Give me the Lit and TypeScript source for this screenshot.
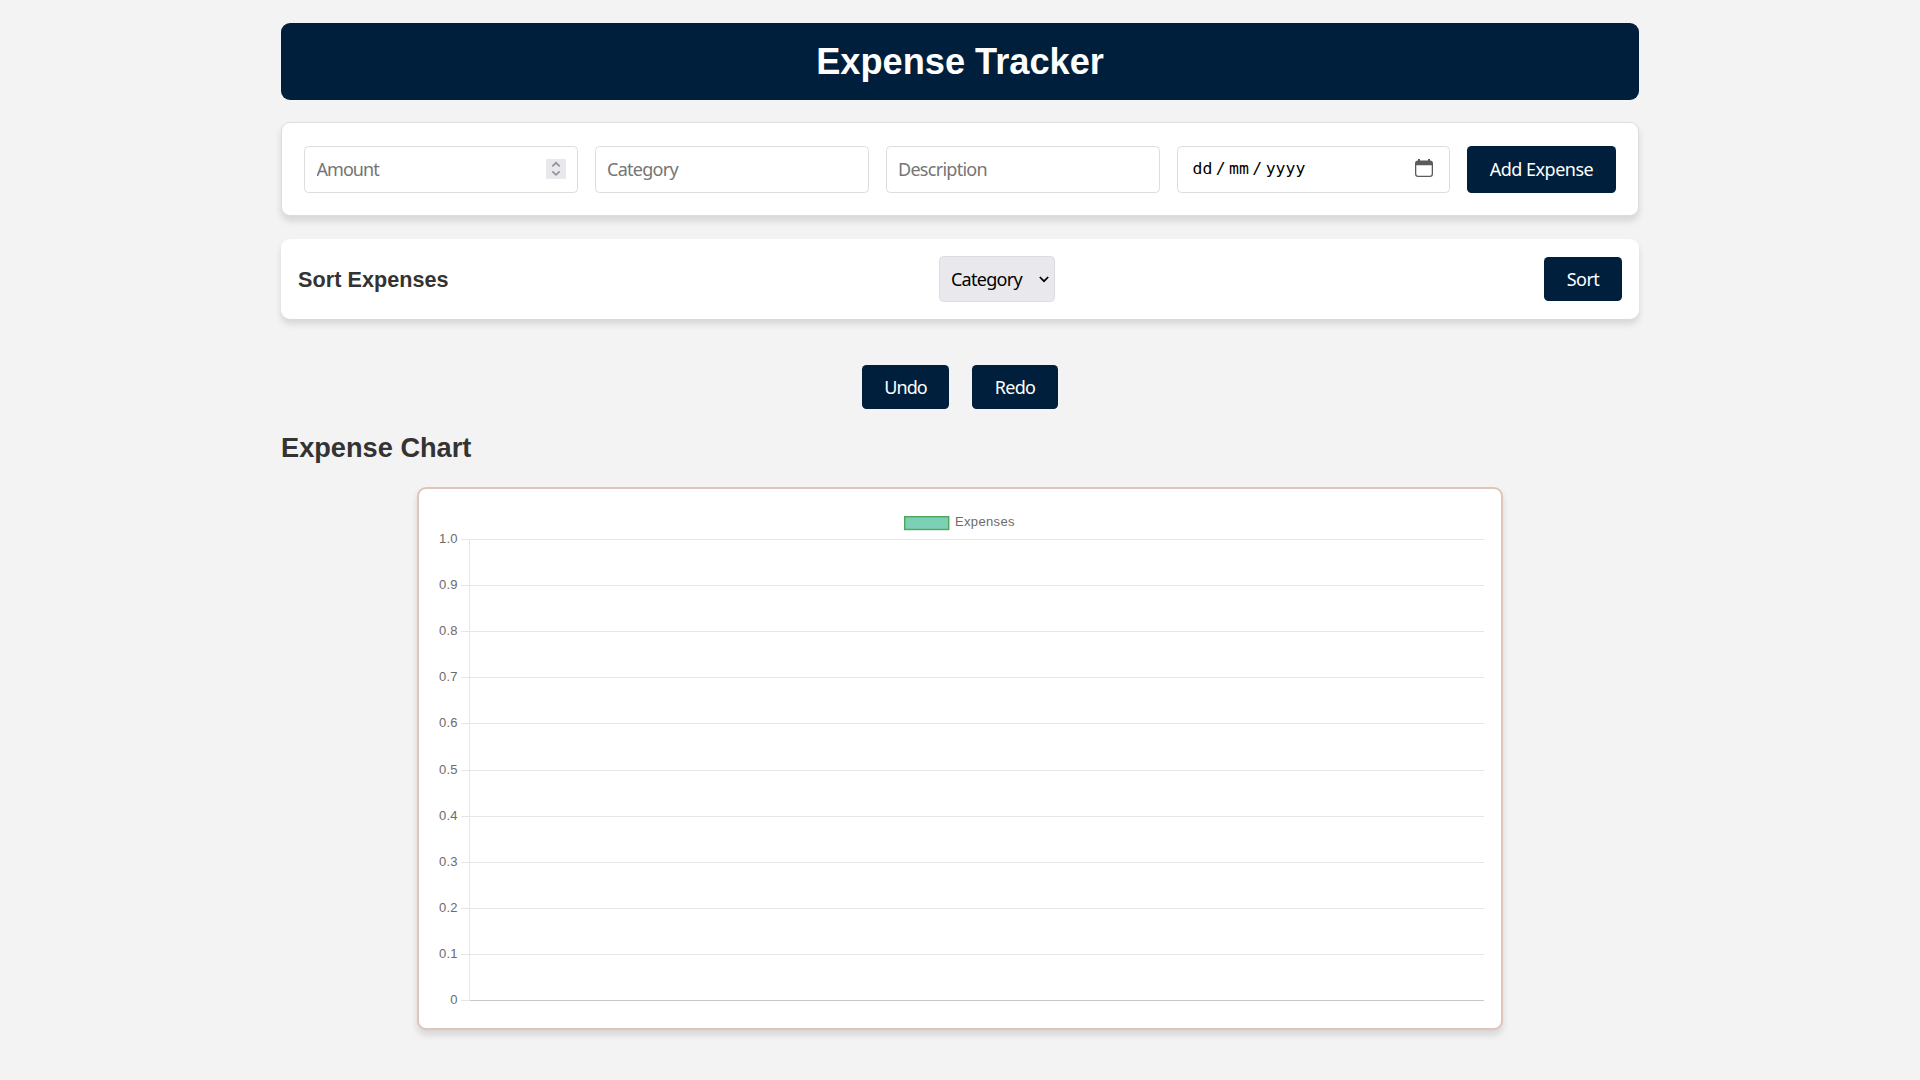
import { LitElement, html, svg, css } from "lit";
import { customElement } from "lit/decorators.js";

@customElement("expense-chart")
class ExpenseChart extends LitElement {
  static styles = css`
    :host { display: block; height: 100%; }
    svg { display: block; }
    text { font-family: "Liberation Sans", Arial, sans-serif; font-size: 13px; fill: #6b6b6b; }
    .tick { letter-spacing: 0.3px; }
    .grid { stroke: #e6e6e6; stroke-width: 1; }
    .axis { stroke: #c8c8c8; stroke-width: 1; }
    .swatch { fill: #7bd0b6; stroke: #4fa65a; stroke-width: 1.4; }
  `;

  render() {
    const rows = Array.from({ length: 11 }, (_, i) => ({
      y: Math.round(50 + i * 46.1) + 0.5,
      label: i === 0 ? "1.0" : i === 10 ? "0" : `0.${10 - i}`,
    }));
    return html`<svg width="1082" height="539" viewBox="0 0 1082 539">
      <rect class="swatch" x="485.7" y="27.7" width="44" height="12.8" />
      <text x="536" y="37.3" textLength="59" lengthAdjust="spacing">Expenses</text>
      ${rows.map(
        (r, i) => svg`
          <text class="tick" x="38.9" y=${r.y + 3.7} text-anchor="end">${r.label}</text>
          <line class="grid" x1="42" y1=${r.y} x2="1065" y2=${r.y} />
          ${i === 10 ? svg`<line class="axis" x1="50" y1=${r.y} x2="1065" y2=${r.y} />` : ""}`
      )}
      <line class="grid" x1="50.5" y1="50" x2="50.5" y2="512" />
    </svg>`;
  }
}

@customElement("app-root")
class AppRoot extends LitElement {
  static styles = css`
    :host {
      display: block;
      min-height: 1080px;
      box-sizing: border-box;
      padding: 23px 281px 0;
      background: #f3f3f3;
      color: #333;
      font-family: "Noto Sans", sans-serif;
      font-size: 18px;
      letter-spacing: -0.5px;
    }
    * { box-sizing: border-box; }
    h1, h2, h3 { margin: 0; font-family: "Liberation Sans", Arial, sans-serif; font-weight: 700; letter-spacing: 0; }
    .title {
      height: 77px;
      line-height: 77px;
      border-radius: 9px;
      background: #001f3c;
      color: #fff;
      font-size: 36.2px;
      text-align: center;
    }
    .card { display: flex; align-items: center; background: #fff; border-radius: 9px; box-shadow: 0 5px 7px rgba(0, 0, 0, 0.12); }
    .form { height: 94px; margin-top: 22px; padding: 0 22px; gap: 17px; border: 1px solid #ddd; }
    .sort { height: 80px; margin-top: 23px; padding: 0 17px; justify-content: space-between; }
    .sort h3 { padding: 2px 1.2px 0 0; font-size: 21.6px; letter-spacing: 0.05px; }
    .field {
      flex: 1 1 100px;
      min-width: 0;
      height: 47px;
      padding: 0 11px;
      display: flex;
      align-items: center;
      border: 1px solid #ddd;
      border-radius: 4.5px;
      background: #fff;
    }
    .field input {
      flex: 1;
      min-width: 0;
      padding: 0;
      border: 0;
      outline: 0;
      background: none;
      font: inherit;
      letter-spacing: -0.72px;
    }
    .field .amount { padding-left: 0.5px; letter-spacing: -0.95px; }
    .field input::placeholder { color: #757575; opacity: 1; }
    .spin { display: block; width: 20px; height: 20px; margin-bottom: 1px; background: #e9e9ed; }
    .date { flex-basis: 99px; padding: 0 16px 2px 14.5px; color: #000; font-family: "DejaVu Sans Mono", monospace; font-size: 16.5px; letter-spacing: 0; }
    .date span { padding-top: 1px; }
    .slash { width: 16.7px; text-align: center; }
    .date svg { margin-left: auto; }
    button {
      height: 44px;
      padding: 0;
      border: 0;
      border-radius: 4.5px;
      background: #001f3c;
      color: #fff;
      font: inherit;
      letter-spacing: inherit;
    }
    .add { width: 149px; height: 47px; }
    .sortbtn { width: 78px; }
    .undo { width: 87px; letter-spacing: -0.9px; }
    .redo { width: 86px; letter-spacing: -0.7px; }
    .select {
      width: 116px;
      height: 46px;
      padding: 0 5px 0 11px;
      display: flex;
      align-items: center;
      justify-content: space-between;
      border: 1px solid #ddd;
      border-radius: 4.5px;
      background: #e9e9ed;
      color: #000;
      letter-spacing: -0.7px;
    }
    .history { display: flex; justify-content: center; gap: 23px; margin-top: 46px; }
    .heading { margin-top: 23px; font-size: 27.2px; line-height: 32px; }
    .chart {
      width: 1086px;
      height: 543px;
      margin: 23px auto 0;
      background: #fff;
      border: 2px solid #dfc5b8;
      border-radius: 9px;
      box-shadow: 0 5px 7px rgba(0, 0, 0, 0.12);
    }
  `;

  render() {
    return html`
      <h1 class="title">Expense Tracker</h1>
      <div class="card form">
        <div class="field">
          <input class="amount" placeholder="Amount" />
          <svg class="spin" viewBox="0 0 20 20" fill="none" stroke="#94939c" stroke-width="1.8">
            <path d="M6.3 7.3 L10 3.8 L13.7 7.3 M6.3 12.3 L10 15.8 L13.7 12.3" />
          </svg>
        </div>
        <div class="field"><input placeholder="Category" /></div>
        <div class="field"><input placeholder="Description" /></div>
        <div class="field date">
          <span>dd</span><span class="slash">/</span><span>mm</span><span class="slash">/</span><span>yyyy</span>
          <svg width="18" height="18" viewBox="0 0 18 18">
            <path fill="#5b5b5b" fill-rule="evenodd" d="M3 0h2v1.5h8V0h2v1.5A3 3 0 0 1 18 4.5V15a3 3 0 0 1-3 3H3a3 3 0 0 1-3-3V4.5A3 3 0 0 1 3 1.5ZM1.3 6.3V15A1.7 1.7 0 0 0 3 16.7H15A1.7 1.7 0 0 0 16.7 15V6.3Z" />
          </svg>
        </div>
        <button class="add">Add Expense</button>
      </div>
      <div class="card sort">
        <h3>Sort Expenses</h3>
        <div class="select">
          <span>Category</span>
          <svg width="10" height="7" viewBox="0 0 10 7" fill="none" stroke="#000" stroke-width="1.7"><path d="M.8 1 L5 5.2 L9.2 1" /></svg>
        </div>
        <button class="sortbtn">Sort</button>
      </div>
      <div class="history">
        <button class="undo">Undo</button>
        <button class="redo">Redo</button>
      </div>
      <h2 class="heading">Expense Chart</h2>
      <div class="chart"><expense-chart></expense-chart></div>
    `;
  }
}
